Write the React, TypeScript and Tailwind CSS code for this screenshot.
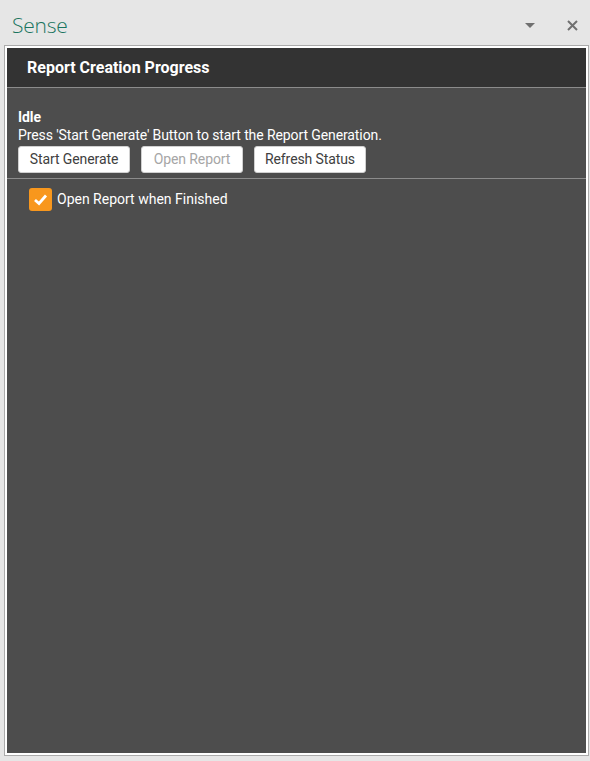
export default function App() {
  return (
    <div className="w-[590px] h-[761px] bg-[#e6e6e6] flex flex-col font-['Roboto',sans-serif]">
      {/* Title bar */}
      <div className="h-[45px] flex items-start pl-[12px] pr-[12px] pt-[12px]">
        <span className="text-[21px] leading-[26px] font-light text-[#1a7560] font-['Open_Sans',sans-serif] tracking-[-0.2px]">
          Sense
        </span>
        <div className="flex-1" />
        <div className="flex items-center gap-[32px] pt-[8px]">
          <svg width="10" height="5" viewBox="0 0 10 5">
            <polygon points="0,0 10,0 5,5" fill="#707070" />
          </svg>
          <svg width="11" height="11" viewBox="0 0 11 11">
            <path d="M1 1 L10 10 M10 1 L1 10" stroke="#707070" strokeWidth="2" />
          </svg>
        </div>
      </div>

      {/* Panel */}
      <div className="ml-[4px] w-[585px] h-[711px] border border-[#ababab] bg-white p-[2px]">
        <div className="h-full bg-[#4d4d4d] flex flex-col">
          <div className="h-[40px] bg-[#333333] border-b border-[#8c8c8c] flex items-center pl-[20px] pt-[1px]">
            <span className="text-white font-bold text-[16px]">Report Creation Progress</span>
          </div>

          <div className="pl-[11px] pt-[20px] pb-[5px] border-b border-[#8c8c8c] text-white text-[14px] tracking-[-0.1px]">
            <div className="font-bold leading-[18px]">Idle</div>
            <div className="leading-[18px]">Press 'Start Generate' Button to start the Report Generation.</div>
            <div className="flex gap-[11px] mt-[2px]">
              <button className="h-[27px] w-[112px] bg-white rounded-[3px] border border-[#d0d0d0] text-[#404040] text-[14px]">
                Start Generate
              </button>
              <button className="h-[27px] w-[102px] bg-white rounded-[3px] border border-[#d0d0d0] text-[#a6a6a6] text-[14px]">
                Open Report
              </button>
              <button className="h-[27px] w-[112px] bg-white rounded-[3px] border border-[#d0d0d0] text-[#404040] text-[14px]">
                Refresh Status
              </button>
            </div>
          </div>

          <div className="flex items-center pl-[22px] pt-[9px] gap-[5px]">
            <div className="w-[23px] h-[23px] rounded-[3px] bg-[#f8971d] flex items-center justify-center">
              <svg width="15" height="13" viewBox="0 0 15 13">
                <path d="M2 7 L6 10.5 L13 2.5" stroke="white" strokeWidth="2.8" fill="none" />
              </svg>
            </div>
            <span className="text-white text-[14px]">Open Report when Finished</span>
          </div>
        </div>
      </div>
    </div>
  );
}
